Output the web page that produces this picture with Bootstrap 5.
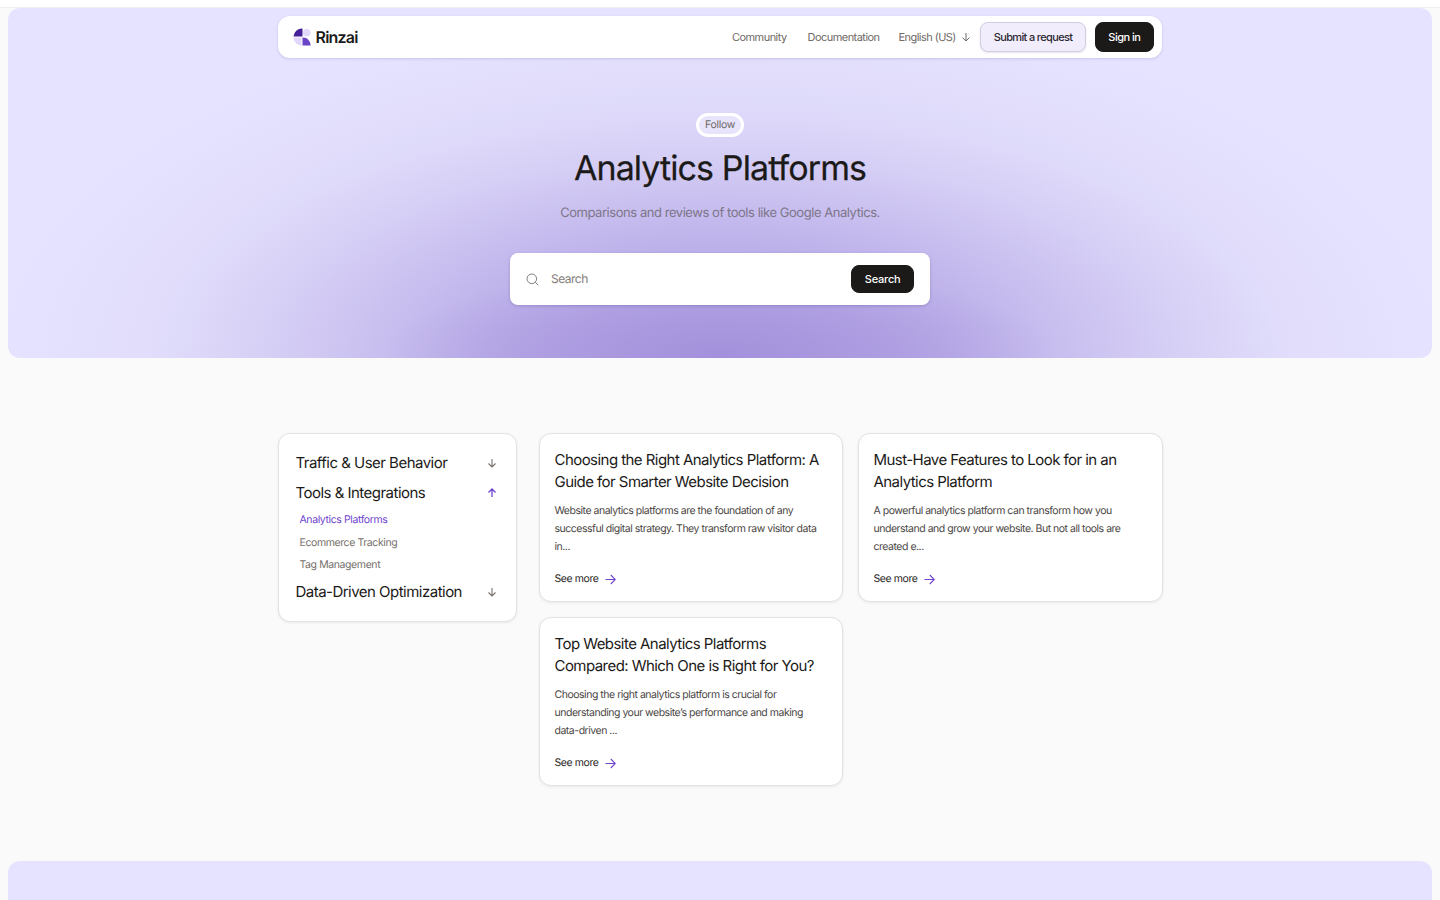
<!DOCTYPE html>
<html lang="en">
<head>
<meta charset="utf-8">
<title>Analytics Platforms</title>
<link href="https://cdn.jsdelivr.net/npm/bootstrap@5.3.0/dist/css/bootstrap.min.css" rel="stylesheet">
<style>
html,body{height:900px;overflow:hidden}
body{background:#fafafa;font-family:Inter,"Liberation Sans",sans-serif;color:#1c1a18;padding:0 8px;-webkit-font-smoothing:antialiased;text-rendering:geometricPrecision}
.top-strip{height:8px;margin:0 -8px;background:#fff;border-bottom:1px solid #efefef}
.hero-band{height:350px;border-radius:12px;background:radial-gradient(ellipse 340px 90px at 50% 100%,rgba(154,132,214,.55) 0%,rgba(154,132,214,.3) 50%,rgba(154,132,214,0) 100%),radial-gradient(ellipse 560px 240px at 50% 100%,rgba(154,132,214,.5) 0%,rgba(154,132,214,.4) 30%,rgba(154,132,214,.2) 60%,rgba(154,132,214,.06) 85%,rgba(154,132,214,0) 100%),radial-gradient(ellipse 720px 350px at 50% 100%,#c4bbee 0%,#cbc3f2 32%,#d8d2f7 55%,#e1ddfb 80%,#e5e3ff 100%);background-color:#e5e3ff;padding-top:8px}
.wrap-w{width:885px;margin:0 auto}
.top-nav{height:42px;width:884px;background:#fff;border-radius:12px;box-shadow:0 1px 3px rgba(60,50,110,.16);padding:0 8px 0 15px}
.brand-name{font-size:16px;font-weight:600;letter-spacing:-.8px;color:#1c1a18;margin-left:5px}
.nav-txt{font-size:11px;color:#6f6a66;letter-spacing:-.55px;text-decoration:none}
.btn-soft{height:30px;font-size:11px;font-weight:500;color:#2a2730;letter-spacing:-.65px;background:#f2edfd;border:1px solid #d3cde4;border-radius:8px;padding:0 13px;box-shadow:0 1px 2px rgba(40,30,80,.12)}
.btn-ink{height:30px;font-size:11px;font-weight:500;color:#fff;letter-spacing:-.5px;background:#1c1a18;border:1px solid #1c1a18;border-radius:8px;padding:0 12px}
.btn-ink:hover,.btn-soft:hover{background:#1c1a18;color:#fff}
.follow-chip{display:inline-block;font-size:10.5px;line-height:16px;color:#6f6a66;letter-spacing:-.3px;background:#e7e4fb;border:3px solid #fff;border-radius:20px;padding:1px 6px}
.hero-title{font-size:34px;font-weight:400;letter-spacing:-.9px;line-height:44px;margin:0;color:#1c1a18;-webkit-text-stroke:.25px #1c1a18}
.hero-sub{font-size:13px;line-height:20px;color:#7d7689;letter-spacing:-.45px;margin:0}
.search-box{width:420px;height:52px;background:#fff;border-radius:8px;box-shadow:0 1px 3px rgba(60,50,110,.25);padding:0 16px}
.search-ph{font-size:12px;color:#827c78;margin-left:12px;letter-spacing:-.5px}
.search-btn{height:28px;padding:0 12.5px;font-size:11px;letter-spacing:-.2px}
.side-box{width:239px;height:189px;background:#fff;border:1px solid #e2e2e2;border-radius:12px;box-shadow:0 1px 3px rgba(0,0,0,.07);padding:14px 19px 0 17px}
.side-head{font-size:15px;letter-spacing:-.52px;line-height:30px;color:#1c1a18}
.side-link{font-size:10.5px;line-height:22.5px;color:#77716d;padding-left:4px;letter-spacing:-.4px}
.side-link.is-on{color:#6f45cf;margin-top:1px}
.post-grid{display:grid;grid-template-columns:304px 305px;gap:15px;align-items:start}
.post-box{height:169px;background:#fff;border:1px solid #e2e2e2;border-radius:12px;box-shadow:0 1px 3px rgba(0,0,0,.07);padding:15px 15px 15px}
.post-title{font-size:15px;font-weight:400;line-height:22px;letter-spacing:-.55px;margin:0 0 9px;color:#1c1a18}
.post-text{font-size:10.5px;line-height:18px;color:#4b4745;margin:0 0 8px;letter-spacing:-.48px}
.post-more{font-size:10.5px;line-height:18px;color:#2a2725;text-decoration:none;letter-spacing:-.42px}
.foot-band{height:60px;margin-top:75px;border-radius:12px 12px 0 0;background:#e5e3ff}
.main-area{margin-top:75px;gap:22px}
</style>
</head>
<body>
<div class="top-strip"></div>
<section class="hero-band">
  <div class="wrap-w">
    <nav class="top-nav d-flex align-items-center justify-content-between">
      <a class="d-flex align-items-center text-decoration-none" href="#">
        <svg width="18" height="18" viewBox="0 0 19 19" aria-hidden="true">
          <path d="M10 .5V9H.5A9 9 0 0 1 10 .5Z" fill="#45209a"/>
          <circle cx="14.5" cy="5" r="4" fill="#e2d8fb"/>
          <path d="M.5 10H9v8.5A8.6 8.6 0 0 1 .5 10Z" fill="#e2d8fb"/>
          <path d="M10 10h1c4 0 7.3 3.6 7.6 8.5H10Z" fill="#6b44c8"/>
        </svg>
        <span class="brand-name">Rinzai</span>
      </a>
      <div class="d-flex align-items-center">
        <a class="nav-txt" href="#">Community</a>
        <a class="nav-txt" style="margin-left:21px" href="#">Documentation</a>
        <span class="nav-txt d-flex align-items-center" style="margin-left:19px">English (US)
          <svg style="margin-left:5px" width="10" height="10" viewBox="0 0 10 10" fill="none" stroke="#6f6a66" stroke-width="1"><path d="M5 1v8M1.5 5.5 5 9l3.5-3.5"/></svg>
        </span>
        <button class="btn btn-soft d-flex align-items-center" style="margin-left:9px" type="button">Submit a request</button>
        <button class="btn btn-ink d-flex align-items-center" style="margin-left:9px" type="button">Sign in</button>
      </div>
    </nav>
  </div>
  <div class="text-center" style="padding-top:52px">
    <span class="follow-chip">Follow</span>
    <h1 class="hero-title" style="margin-top:10px">Analytics Platforms</h1>
    <p class="hero-sub" style="margin-top:12px">Comparisons and reviews of tools like Google Analytics.</p>
    <div class="search-box d-flex align-items-center mx-auto text-start" style="margin-top:30px">
      <svg width="13" height="13" viewBox="0 0 13 13" fill="none" stroke="#827c78" stroke-width="1"><circle cx="5.8" cy="5.8" r="4.8"/><path d="m9.3 9.3 3 3"/></svg>
      <span class="search-ph flex-grow-1">Search</span>
      <button class="btn btn-ink search-btn d-flex align-items-center" type="button">Search</button>
    </div>
  </div>
</section>

<main class="wrap-w main-area d-flex align-items-start">
  <aside class="side-box flex-shrink-0">
    <div class="side-head d-flex align-items-center justify-content-between">Traffic &amp; User Behavior
      <svg width="10" height="10" viewBox="0 0 10 10" fill="none" stroke="#77716d" stroke-width="1.1"><path d="M5 1v8M1.5 5.5 5 9l3.5-3.5"/></svg>
    </div>
    <div class="side-head d-flex align-items-center justify-content-between">Tools &amp; Integrations
      <svg width="10" height="10" viewBox="0 0 10 10" fill="none" stroke="#6f45cf" stroke-width="1.3"><path d="M5 9V1M1.5 4.5 5 1l3.5 3.5"/></svg>
    </div>
    <div class="side-link is-on">Analytics Platforms</div>
    <div class="side-link">Ecommerce Tracking</div>
    <div class="side-link">Tag Management</div>
    <div class="side-head d-flex align-items-center justify-content-between">Data-Driven Optimization
      <svg width="10" height="10" viewBox="0 0 10 10" fill="none" stroke="#77716d" stroke-width="1.1"><path d="M5 1v8M1.5 5.5 5 9l3.5-3.5"/></svg>
    </div>
  </aside>
  <div class="post-grid">
    <article class="post-box">
      <h2 class="post-title">Choosing the Right Analytics Platform: A Guide for Smarter Website Decision</h2>
      <p class="post-text">Website analytics platforms are the foundation of any successful digital strategy. They transform raw visitor data in...</p>
      <a class="post-more d-inline-flex align-items-center" href="#">See more
        <svg style="margin-left:7px" width="11" height="11" viewBox="0 0 11 11" fill="none" stroke="#6f45cf" stroke-width="1.1"><path d="M.5 5.5h9.6M5.8 1l4.5 4.5L5.8 10"/></svg></a>
    </article>
    <article class="post-box">
      <h2 class="post-title">Must-Have Features to Look for in an Analytics Platform</h2>
      <p class="post-text">A powerful analytics platform can transform how you understand and grow your website. But not all tools are created e...</p>
      <a class="post-more d-inline-flex align-items-center" href="#">See more
        <svg style="margin-left:7px" width="11" height="11" viewBox="0 0 11 11" fill="none" stroke="#6f45cf" stroke-width="1.1"><path d="M.5 5.5h9.6M5.8 1l4.5 4.5L5.8 10"/></svg></a>
    </article>
    <article class="post-box">
      <h2 class="post-title">Top Website Analytics Platforms Compared: Which One is Right for You?</h2>
      <p class="post-text">Choosing the right analytics platform is crucial for understanding your website’s performance and making data-driven ...</p>
      <a class="post-more d-inline-flex align-items-center" href="#">See more
        <svg style="margin-left:7px" width="11" height="11" viewBox="0 0 11 11" fill="none" stroke="#6f45cf" stroke-width="1.1"><path d="M.5 5.5h9.6M5.8 1l4.5 4.5L5.8 10"/></svg></a>
    </article>
  </div>
</main>
<div class="foot-band"></div>
<script src="https://cdn.jsdelivr.net/npm/bootstrap@5.3.0/dist/js/bootstrap.bundle.min.js"></script>
</body>
</html>
